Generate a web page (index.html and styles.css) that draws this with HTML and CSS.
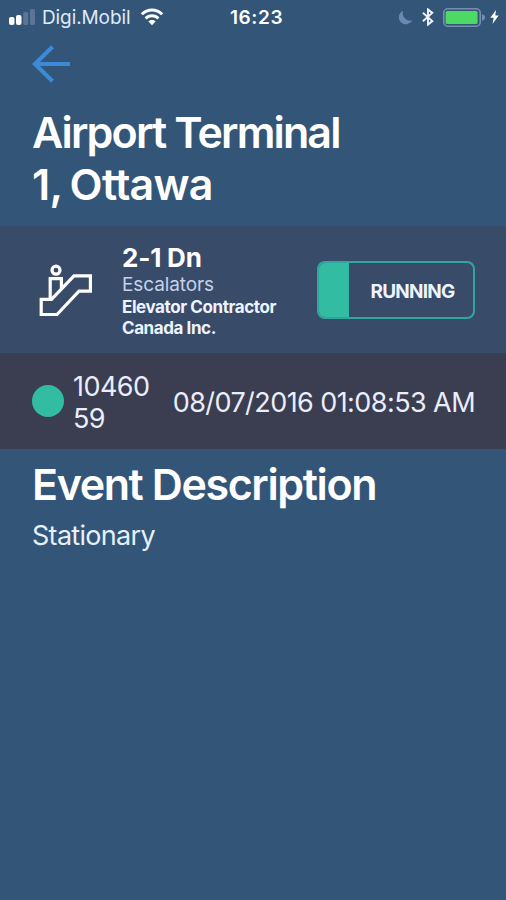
FILE: index.html
```html
<!DOCTYPE html>
<html lang="en">
<head>
<meta charset="utf-8">
<title>Event details</title>
<link rel="stylesheet" href="styles.css">
</head>
<body>
<header class="status-bar">
  <div class="status-left">
    <svg class="signal" width="27" height="16" viewBox="0 0 27 16"><rect x="0" y="8" width="5.5" height="8" rx="2" fill="#fff"/><rect x="7" y="6" width="5.5" height="10" rx="2" fill="#fff"/><rect x="14.2" y="3" width="5" height="13" rx="1.5" fill="#5b7595"/><rect x="21" y="0" width="5" height="16" rx="1.5" fill="#5b7595"/></svg>
    <span class="carrier">Digi.Mobil</span>
    <svg class="wifi" width="24" height="18" viewBox="0 0 24 18" fill="none" stroke="#fff" stroke-width="3"><path d="M1.8 6.2a14.4 14.4 0 0 1 20.4 0"/><path d="M5.6 10.5a9 9 0 0 1 12.8 0"/><path d="M12 17.3l-3.6-3.8a5.1 5.1 0 0 1 7.2 0z" fill="#fff" stroke="none"/></svg>
  </div>
  <time class="clock">16:23</time>
  <div class="status-right">
    <svg class="moon" width="15" height="15" viewBox="0 0 15 15"><path d="M5.2.8A7 7 0 1 0 14.2 10.2 7.2 7.2 0 0 1 5.2.8z" fill="#6b89b2"/></svg>
    <svg class="bluetooth" width="12" height="18" viewBox="0 0 12 18" fill="none" stroke="#eef5ff" stroke-width="1.9"><path d="M.9 4.8l9.4 8.3L6 16.6V1.4l4.3 3.5L.9 13.2"/></svg>
    <svg class="battery" width="42" height="19" viewBox="0 0 42 19"><rect x=".8" y=".8" width="36.4" height="17.4" rx="4" fill="none" stroke="#7890b0" stroke-width="1.6"/><rect x="2.6" y="3" width="32" height="13" rx="1.5" fill="#4cd964"/><path d="M39 6.3q3 .8 3 3.2t-3 3.2z" fill="#7890b0"/></svg>
    <svg class="bolt" width="9" height="14" viewBox="0 0 9 14"><path d="M6 0L.3 7.8h3.4L2.5 14 8.7 5.6H5.3z" fill="#fff"/></svg>
  </div>
</header>
<nav class="nav">
  <svg width="38" height="38" viewBox="0 0 38 38" fill="none" stroke="#3b8ad8" stroke-width="4.2"><path d="M20.5 1.8L3 19l17.5 17.2M3 19h35"/></svg>
</nav>
<main>
  <h1 class="title">Airport Terminal<br><span class="title-end">1, Ottawa</span></h1>
  <section class="unit">
    <svg class="escalator" width="54" height="54" viewBox="0 0 54 54" fill="none" stroke="#fff" stroke-width="3.2"><circle cx="18" cy="7.2" r="4"/><path d="M12.2 36V15.600h11.200v10"/><path d="M3.200 36.300h10.300L36 12.800h16.400v15.400H41L19 51.500H3.200z"/></svg>
    <div class="info">
      <div class="name">2-1 Dn</div>
      <div class="kind">Escalators</div>
      <div class="contractor">Elevator Contractor<br>Canada Inc.</div>
    </div>
    <div class="badge"><span class="badge-fill"></span><span class="badge-text">RUNNING</span></div>
  </section>
  <section class="event">
    <span class="dot"></span>
    <div class="code">10460<br>59</div>
    <div class="date">08/07/2016 01:08:53 AM</div>
  </section>
  <section class="description">
    <h2 class="heading">Event Description</h2>
    <p class="body">Stationary</p>
  </section>
</main>
</body>
</html>
```
FILE: styles.css
```css
* { box-sizing: border-box; }
body {
  margin: 0;
  min-height: 900px;
  background: #335578;
  color: #fff;
  font-family: Inter, "Liberation Sans", sans-serif;
  white-space: nowrap;
}
svg { display: block; flex: none; }
.status-bar {
  display: grid;
  grid-template-columns: 1fr auto 1fr;
  height: 34px;
  padding: 0 7px 0 9px;
  align-items: center;
}
.status-left, .status-right { display: flex; align-items: center; }
.status-right { justify-content: flex-end; }
.carrier { margin-left: 6px; padding-top: 1px; font-size: 19px; line-height: 24px; letter-spacing: -0.1px; color: #dfeaf8; }
.wifi { margin-left: 10px; }
.clock { padding: 1px 0 0 5px; font-size: 19px; line-height: 24px; font-weight: 600; letter-spacing: 0.6px; }
.moon { margin-right: 9px; }
.bluetooth { margin-right: 9px; }
.battery { margin-right: 5px; }
.nav { padding: 11px 0 0 32px; height: 72px; }
.title, .heading { margin: 0; font-size: 43px; line-height: 52px; font-weight: 600; }
.title { height: 120px; padding-left: 32px; letter-spacing: -1.85px; }
.title-end { letter-spacing: -0.75px; word-spacing: -2px; }
.heading { letter-spacing: -1.4px; }
.unit {
  display: flex;
  align-items: center;
  height: 127px;
  padding: 0 31px 0 38px;
  background: #384b68;
}
.info { margin-left: 30px; padding-top: 2px; }
.name { font-size: 26px; line-height: 31px; font-weight: 700; letter-spacing: -0.2px; }
.kind { font-size: 19px; line-height: 23px; letter-spacing: -0.1px; color: #c5d2e8; }
.contractor { padding-top: 1px; font-size: 17px; line-height: 21.5px; font-weight: 700; letter-spacing: -0.42px; color: #edf4ff; }
.badge {
  display: flex;
  width: 158px;
  height: 58px;
  margin-left: auto;
  border: 2px solid #30a79c;
  border-radius: 8px;
  overflow: hidden;
}
.badge-fill { width: 30px; background: #32bda2; }
.badge-text {
  flex: 1;
  padding: 2px 0 0 3px;
  text-align: center;
  font-size: 19px;
  line-height: 54px;
  font-weight: 700;
  letter-spacing: -0.8px;
  color: #edf4ff;
}
.event {
  display: flex;
  align-items: center;
  height: 96px;
  padding: 0 31px 0 32px;
  background: #3b3d51;
  color: #e9eefa;
  font-size: 27px;
  line-height: 32px;
  letter-spacing: -0.57px;
}
.dot { width: 32px; height: 32px; border-radius: 50%; background: #32bda2; }
.code { margin-left: 9px; padding-top: 4px; }
.date { margin-left: auto; padding-top: 3px; }
.description { padding: 9px 32px; }
.body { margin: 9px 0 0; font-size: 27px; line-height: 34px; letter-spacing: -0.7px; color: #e6f0fa; }
```
